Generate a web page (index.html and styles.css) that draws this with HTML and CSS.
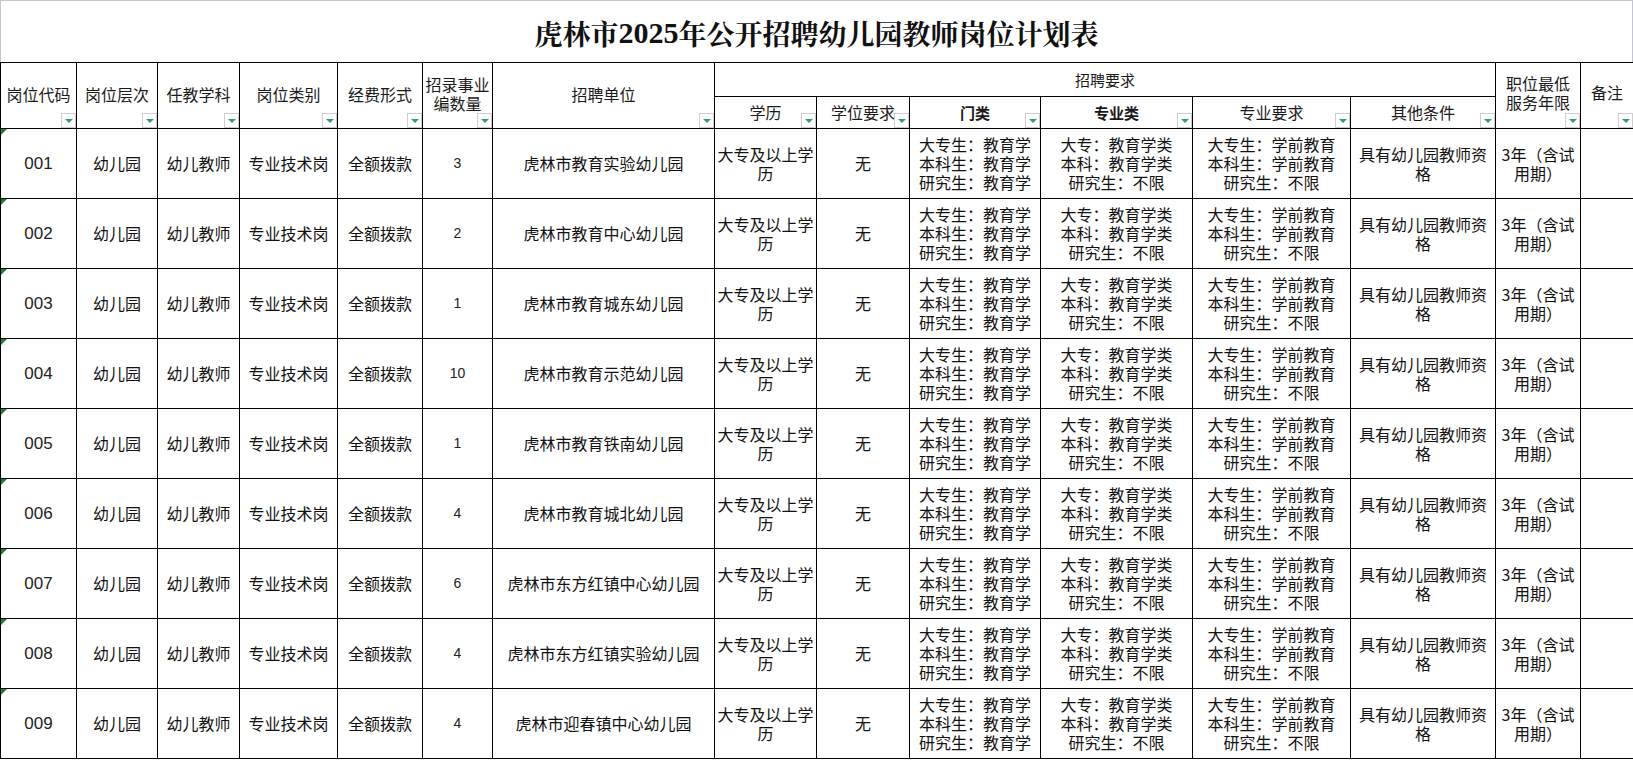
FILE: index.html
```html
<!DOCTYPE html>
<html lang="zh-CN">
<head>
<meta charset="utf-8">
<title>虎林市2025年公开招聘幼儿园教师岗位计划表</title>
<link rel="stylesheet" href="styles.css">
</head>
<body>
<div class="sheet">
  <div class="title">虎林市<span class="num">2025</span>年公开招聘幼儿园教师岗位计划表</div>
  <table class="grid">
    <colgroup>
      <col class="c1"><col class="c2"><col class="c3"><col class="c4"><col class="c5">
      <col class="c6"><col class="c7"><col class="c8"><col class="c9"><col class="c10">
      <col class="c11"><col class="c12"><col class="c13"><col class="c14"><col class="c15">
    </colgroup>
    <thead>
      <tr class="h1">
        <th rowspan="2">岗位代码<span class="flt"></span></th>
        <th rowspan="2">岗位层次<span class="flt"></span></th>
        <th rowspan="2">任教学科<span class="flt"></span></th>
        <th rowspan="2">岗位类别<span class="flt"></span></th>
        <th rowspan="2">经费形式<span class="flt"></span></th>
        <th rowspan="2" class="two">招录事业<br>编数量<span class="flt"></span></th>
        <th rowspan="2">招聘单位<span class="flt"></span></th>
        <th colspan="6" class="group">招聘要求</th>
        <th rowspan="2" class="two top">职位最低<br>服务年限<span class="flt"></span></th>
        <th rowspan="2" class="top">备注<span class="flt"></span></th>
      </tr>
      <tr class="h2">
        <th>学历<span class="flt"></span></th>
        <th>学位要求<span class="flt"></span></th>
        <th class="strong">门类<span class="flt"></span></th>
        <th class="strong">专业类<span class="flt"></span></th>
        <th>专业要求<span class="flt"></span></th>
        <th>其他条件<span class="flt"></span></th>
      </tr>
    </thead>
    <tbody id="rows">
      <tr><td class="code">001</td><td>幼儿园</td><td>幼儿教师</td><td>专业技术岗</td><td>全额拨款</td><td class="cnt">3</td><td>虎林市教育实验幼儿园</td><td class="edu">大专及以上学<br>历</td><td>无</td><td>大专生：教育学<br>本科生：教育学<br>研究生：教育学</td><td>大专：教育学类<br>本科：教育学类<br>研究生：不限</td><td>大专生：学前教育<br>本科生：学前教育<br>研究生：不限</td><td>具有幼儿园教师资<br>格</td><td>3年（含试<br>用期）</td><td></td></tr>
      <tr><td class="code">002</td><td>幼儿园</td><td>幼儿教师</td><td>专业技术岗</td><td>全额拨款</td><td class="cnt">2</td><td>虎林市教育中心幼儿园</td><td class="edu">大专及以上学<br>历</td><td>无</td><td>大专生：教育学<br>本科生：教育学<br>研究生：教育学</td><td>大专：教育学类<br>本科：教育学类<br>研究生：不限</td><td>大专生：学前教育<br>本科生：学前教育<br>研究生：不限</td><td>具有幼儿园教师资<br>格</td><td>3年（含试<br>用期）</td><td></td></tr>
      <tr><td class="code">003</td><td>幼儿园</td><td>幼儿教师</td><td>专业技术岗</td><td>全额拨款</td><td class="cnt">1</td><td>虎林市教育城东幼儿园</td><td class="edu">大专及以上学<br>历</td><td>无</td><td>大专生：教育学<br>本科生：教育学<br>研究生：教育学</td><td>大专：教育学类<br>本科：教育学类<br>研究生：不限</td><td>大专生：学前教育<br>本科生：学前教育<br>研究生：不限</td><td>具有幼儿园教师资<br>格</td><td>3年（含试<br>用期）</td><td></td></tr>
      <tr><td class="code">004</td><td>幼儿园</td><td>幼儿教师</td><td>专业技术岗</td><td>全额拨款</td><td class="cnt">10</td><td>虎林市教育示范幼儿园</td><td class="edu">大专及以上学<br>历</td><td>无</td><td>大专生：教育学<br>本科生：教育学<br>研究生：教育学</td><td>大专：教育学类<br>本科：教育学类<br>研究生：不限</td><td>大专生：学前教育<br>本科生：学前教育<br>研究生：不限</td><td>具有幼儿园教师资<br>格</td><td>3年（含试<br>用期）</td><td></td></tr>
      <tr><td class="code">005</td><td>幼儿园</td><td>幼儿教师</td><td>专业技术岗</td><td>全额拨款</td><td class="cnt">1</td><td>虎林市教育铁南幼儿园</td><td class="edu">大专及以上学<br>历</td><td>无</td><td>大专生：教育学<br>本科生：教育学<br>研究生：教育学</td><td>大专：教育学类<br>本科：教育学类<br>研究生：不限</td><td>大专生：学前教育<br>本科生：学前教育<br>研究生：不限</td><td>具有幼儿园教师资<br>格</td><td>3年（含试<br>用期）</td><td></td></tr>
      <tr><td class="code">006</td><td>幼儿园</td><td>幼儿教师</td><td>专业技术岗</td><td>全额拨款</td><td class="cnt">4</td><td>虎林市教育城北幼儿园</td><td class="edu">大专及以上学<br>历</td><td>无</td><td>大专生：教育学<br>本科生：教育学<br>研究生：教育学</td><td>大专：教育学类<br>本科：教育学类<br>研究生：不限</td><td>大专生：学前教育<br>本科生：学前教育<br>研究生：不限</td><td>具有幼儿园教师资<br>格</td><td>3年（含试<br>用期）</td><td></td></tr>
      <tr><td class="code">007</td><td>幼儿园</td><td>幼儿教师</td><td>专业技术岗</td><td>全额拨款</td><td class="cnt">6</td><td>虎林市东方红镇中心幼儿园</td><td class="edu">大专及以上学<br>历</td><td>无</td><td>大专生：教育学<br>本科生：教育学<br>研究生：教育学</td><td>大专：教育学类<br>本科：教育学类<br>研究生：不限</td><td>大专生：学前教育<br>本科生：学前教育<br>研究生：不限</td><td>具有幼儿园教师资<br>格</td><td>3年（含试<br>用期）</td><td></td></tr>
      <tr><td class="code">008</td><td>幼儿园</td><td>幼儿教师</td><td>专业技术岗</td><td>全额拨款</td><td class="cnt">4</td><td>虎林市东方红镇实验幼儿园</td><td class="edu">大专及以上学<br>历</td><td>无</td><td>大专生：教育学<br>本科生：教育学<br>研究生：教育学</td><td>大专：教育学类<br>本科：教育学类<br>研究生：不限</td><td>大专生：学前教育<br>本科生：学前教育<br>研究生：不限</td><td>具有幼儿园教师资<br>格</td><td>3年（含试<br>用期）</td><td></td></tr>
      <tr><td class="code">009</td><td>幼儿园</td><td>幼儿教师</td><td>专业技术岗</td><td>全额拨款</td><td class="cnt">4</td><td>虎林市迎春镇中心幼儿园</td><td class="edu">大专及以上学<br>历</td><td>无</td><td>大专生：教育学<br>本科生：教育学<br>研究生：教育学</td><td>大专：教育学类<br>本科：教育学类<br>研究生：不限</td><td>大专生：学前教育<br>本科生：学前教育<br>研究生：不限</td><td>具有幼儿园教师资<br>格</td><td>3年（含试<br>用期）</td><td></td></tr>
    </tbody>
  </table>
</div>
</body>
</html>
```

FILE: styles.css
```css
html, body {
  margin: 0;
  padding: 0;
  background: #ffffff;
}

.sheet {
  width: 1633px;
  font-family: "Noto Sans CJK SC", "Noto Sans", sans-serif;
  color: #000;
}

.title {
  height: 62px;
  box-sizing: border-box;
  border: 1px solid #c4c4d4;
  border-bottom: none;
  display: flex;
  align-items: center;
  justify-content: center;
  font-family: "Noto Serif CJK SC", "Noto Sans CJK SC", serif;
  font-weight: bold;
  font-size: 28px;
  line-height: 1;
  padding-top: 3px;
  color: #111;
}

.title .num {
  font-family: "Liberation Serif", serif;
  font-weight: bold;
  font-size: 30px;
}

.grid {
  width: 1633px;
  border-collapse: collapse;
  table-layout: fixed;
}

.c1 { width: 76px; }
.c2 { width: 81px; }
.c3 { width: 82px; }
.c4 { width: 98px; }
.c5 { width: 85px; }
.c6 { width: 70px; }
.c7 { width: 222px; }
.c8 { width: 102px; }
.c9 { width: 93px; }
.c10 { width: 131px; }
.c11 { width: 152px; }
.c12 { width: 158px; }
.c13 { width: 145px; }
.c14 { width: 85px; }
.c15 { width: 53px; }

.grid th,
.grid td {
  border: 1px solid #000;
  padding: 0 1px;
  text-align: center;
  vertical-align: middle;
  overflow: hidden;
}

.grid th {
  position: relative;
  font-weight: normal;
  font-size: 16px;
  line-height: 19px;
  color: #1a1a1a;
}

.h1 { height: 34px; }
.h2 { height: 32px; }

.h1 th { padding-bottom: 3px; }
.h1 th.group { padding-bottom: 0; font-size: 15px; }
.h1 th.top { vertical-align: middle; padding-bottom: 6px; }

.h2 th { padding-bottom: 0; }
.h2 th.strong { font-weight: bold; font-size: 15px; }

.flt {
  position: absolute;
  right: 0;
  bottom: 0;
  width: 13px;
  height: 13px;
  border: 1px solid #cfcfcf;
  background: #ffffff;
  box-sizing: content-box;
}

.flt::after {
  content: "";
  position: absolute;
  left: 3px;
  top: 5px;
  border-left: 4px solid transparent;
  border-right: 4px solid transparent;
  border-top: 4px solid #2f9f74;
}

.grid tbody tr { height: 70px; }

.grid td {
  font-size: 16px;
  line-height: 19px;
  color: #111;
}

.grid td.code {
  position: relative;
  font-family: "Liberation Sans", sans-serif;
  font-size: 17px;
  color: #222;
}

.grid td.code::before {
  content: "";
  position: absolute;
  left: 0;
  top: 0;
  border-top: 6px solid #1f7a3c;
  border-right: 6px solid transparent;
}

.grid td.cnt {
  font-family: "Liberation Sans", sans-serif;
  font-size: 14px;
  color: #222;
}

.grid td.edu {
  padding: 0;
}
```
